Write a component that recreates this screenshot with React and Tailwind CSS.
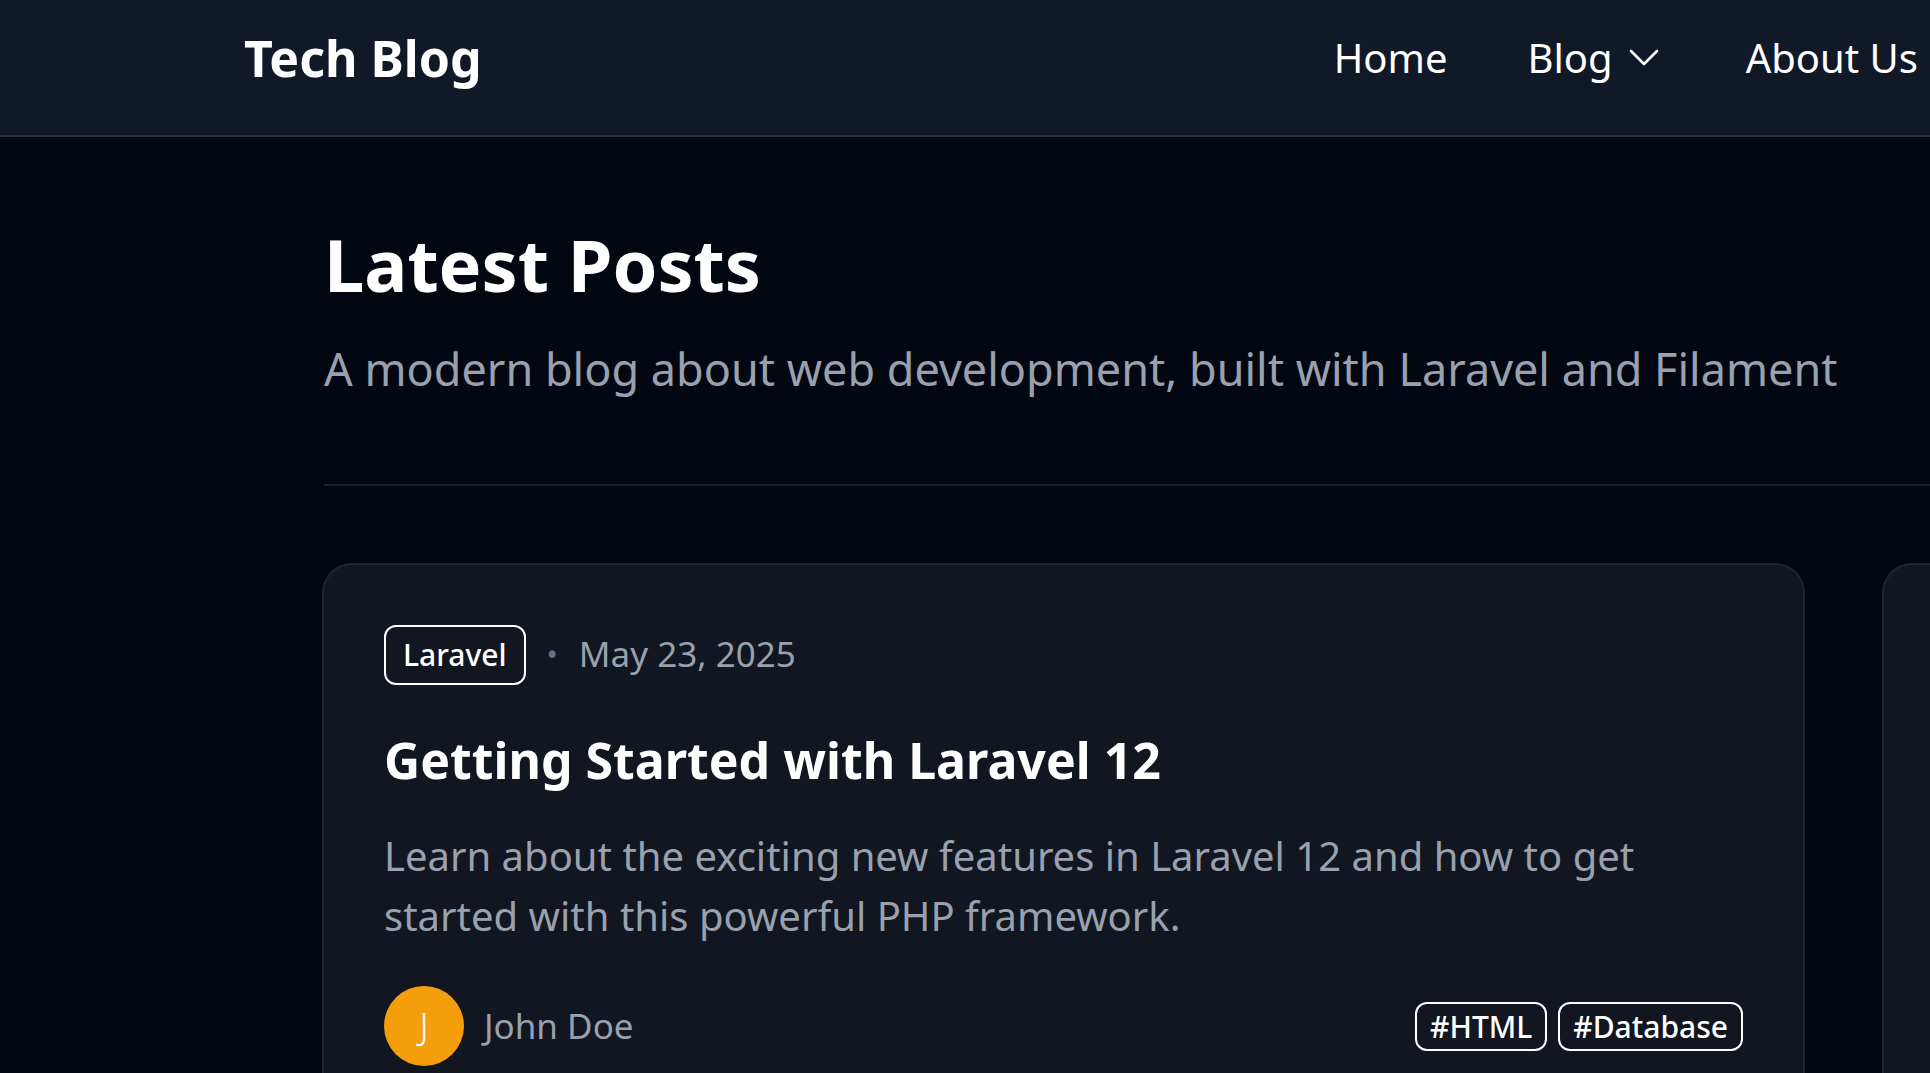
const posts = [
  {
    category: "Laravel",
    date: "May 23, 2025",
    title: "Getting Started with Laravel 12",
    excerpt:
      "Learn about the exciting new features in Laravel 12 and how to get started with this powerful PHP framework.",
    author: "John Doe",
    tags: ["#HTML", "#Database"],
  },
  {
    category: "Filament",
    date: "May 20, 2025",
    title: "Building Admin Panels with Filament",
    excerpt:
      "A practical guide to building fast, beautiful admin panels for your Laravel apps using Filament.",
    author: "Jane Smith",
    tags: ["#PHP"],
  },
];

function ChevronDown() {
  return (
    <svg width="30" height="18" viewBox="0 0 30 18" fill="none" className="mr-[7px]">
      <polyline
        points="2,2 15,15 28,2"
        stroke="currentColor"
        strokeWidth="2.6"
        strokeLinecap="round"
        strokeLinejoin="round"
      />
    </svg>
  );
}

function PostCard({ post }) {
  return (
    <article className="rounded-[30px] border-2 border-[#1f2430] bg-[#111620] p-[60px]">
      {/* category + date */}
      <div className="flex items-center gap-[21px]">
        <span className="rounded-xl border-2 border-white px-[17px] py-[7px] text-[30px] leading-[42px] font-medium text-white">
          {post.category}
        </span>
        <span className="text-[30px] text-gray-500">•</span>
        <span className="text-[35px] text-gray-400">{post.date}</span>
      </div>

      <h2 className="mt-[44px] text-[50px] leading-[1.25] font-bold text-white">
        {post.title}
      </h2>

      <p className="mt-[35px] text-[40px] leading-[60px] text-gray-400">
        {post.excerpt}
      </p>

      {/* author + tags */}
      <div className="mt-[40px] flex items-center justify-between">
        <div className="flex items-center gap-[20px]">
          <div className="flex h-[80px] w-[80px] items-center justify-center rounded-full bg-[#f59e0b] text-[36px] font-light text-white">
            {post.author[0]}
          </div>
          <span className="text-[35px] text-gray-400">{post.author}</span>
        </div>
        <div className="flex gap-[11px]">
          {post.tags.map((tag) => (
            <span
              key={tag}
              className="rounded-xl border-2 border-white px-[13px] text-[30px] leading-[45px] font-medium text-white"
            >
              {tag}
            </span>
          ))}
        </div>
      </div>
    </article>
  );
}

export default function App() {
  return (
    <div
      className="min-h-screen w-full overflow-hidden bg-[#030712] text-white"
      style={{ fontFamily: '"Noto Sans", "Open Sans", sans-serif' }}
    >
      {/* Header */}
      <header className="border-b-2 border-[#2b303b] bg-[#111827] pb-[19px]">
        <div className="flex h-[116px] items-center pl-[244px] pr-[12px]">
          <a className="text-[50px] leading-[1.5] font-bold text-white">Tech Blog</a>
          <nav className="ml-auto flex items-center gap-[80px] text-[40px] leading-[1.5] whitespace-nowrap text-white">
            <a>Home</a>
            <a className="flex items-center gap-[16px]">
              Blog
              <ChevronDown />
            </a>
            <a>About Us</a>
          </nav>
        </div>
      </header>

      {/* Main */}
      <main className="pt-[88px] pl-[322px]">
        <div className="pl-[2px]">
          <h1 className="text-[72px] leading-[1.1] font-bold text-white">Latest Posts</h1>
          <p className="mt-[31px] text-[45px] leading-[1.5] whitespace-nowrap text-gray-400">
            A modern blog about web development, built with Laravel and Filament
          </p>
        </div>

        <div className="mt-[81px] ml-[2px] h-[2px] w-[3000px] bg-[#1a1f2a]" />

        <div className="mt-[77px] grid w-[3043px] grid-cols-[1483px_1483px] gap-[77px]">
          {posts.map((post) => (
            <PostCard key={post.title} post={post} />
          ))}
        </div>
      </main>
    </div>
  );
}
